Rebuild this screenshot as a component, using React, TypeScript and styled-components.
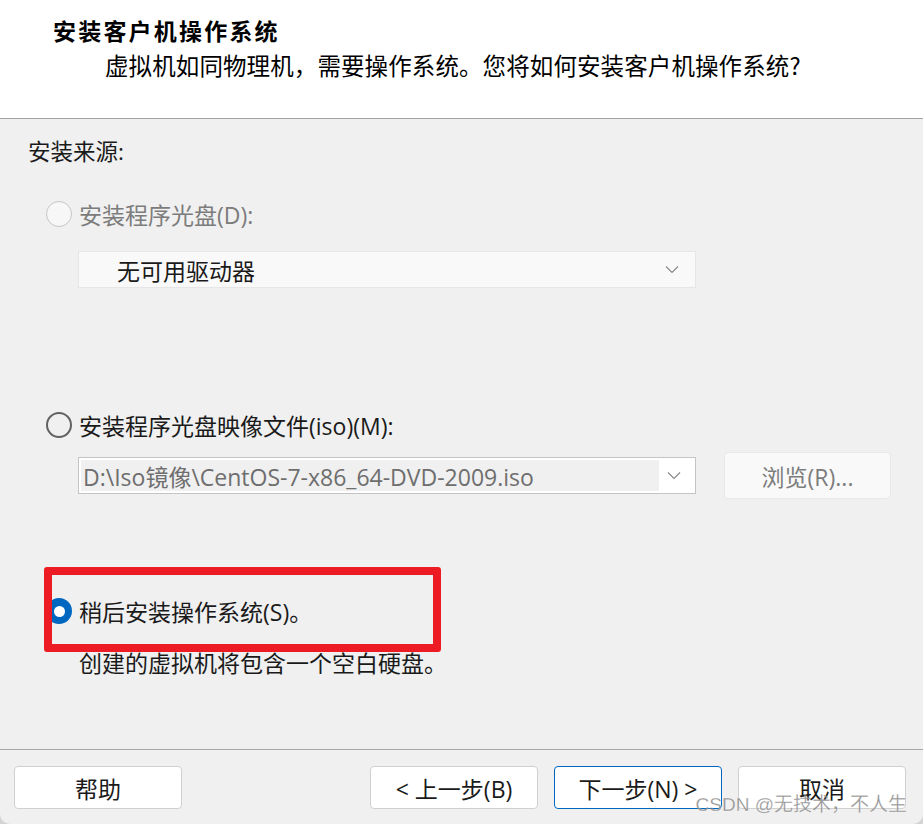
import styled, { createGlobalStyle } from 'styled-components';

const GlobalStyle = createGlobalStyle`
  html, body {
    margin: 0;
    padding: 0;
    background: #d4d4d4;
  }
  * {
    box-sizing: border-box;
  }
`;

const FONT = `"Open Sans", "Noto Sans CJK SC", sans-serif`;

const Window = styled.div`
  width: 923px;
  height: 824px;
  display: flex;
  flex-direction: column;
  background: #f0f0f0;
  border-radius: 0 0 10px 10px;
  overflow: hidden;
  position: relative;
  font-family: ${FONT};
  color: #1a1a1a;
`;

const Header = styled.header`
  height: 119px;
  background: #ffffff;
  border-bottom: 1px solid #a3a3a3;
  padding: 13px 0 0 53px;
  font-family: "Noto Sans CJK SC", sans-serif;
`;

const Title = styled.h1`
  margin: 0;
  font-size: 23px;
  font-weight: 700;
  line-height: 34px;
  letter-spacing: 2.2px;
  color: #000;
`;

const Subtitle = styled.p`
  margin: 0 0 0 52px;
  font-size: 23.5px;
  line-height: 36px;
  letter-spacing: 0.1px;
  color: #000;
`;

const Body = styled.main`
  flex: 1;
  display: flex;
  flex-direction: column;
  padding: 18px 0 0 28px;
  position: relative;
`;

const SectionLabel = styled.div`
  font-size: 22.5px;
  line-height: 30px;
  margin-bottom: 32px;
`;

const OptionRow = styled.label<{ $disabled?: boolean }>`
  display: flex;
  align-items: center;
  gap: 7px;
  margin-left: 18px;
  height: 30px;
  font-size: 23px;
  color: ${(p) => (p.$disabled ? '#7c7c7c' : '#1a1a1a')};
`;

const Radio = styled.span<{ $state: 'disabled' | 'off' | 'on' }>`
  width: 26px;
  height: 26px;
  border-radius: 50%;
  flex-shrink: 0;
  display: flex;
  align-items: center;
  justify-content: center;
  background: ${(p) =>
    p.$state === 'on' ? '#0067c0' : p.$state === 'disabled' ? '#f7f7f7' : 'transparent'};
  border: ${(p) =>
    p.$state === 'on'
      ? 'none'
      : p.$state === 'disabled'
      ? '1.5px solid #c6c6c6'
      : '2px solid #626262'};

  &::after {
    content: '';
    display: ${(p) => (p.$state === 'on' ? 'block' : 'none')};
    width: 11px;
    height: 11px;
    border-radius: 50%;
    background: #ffffff;
  }
`;

const FieldRow = styled.div<{ $top: number }>`
  display: flex;
  align-items: center;
  gap: 28px;
  margin: ${(p) => p.$top}px 0 0 50px;
`;

const Select = styled.div<{ $disabled?: boolean }>`
  width: 618px;
  height: 37px;
  display: flex;
  align-items: center;
  justify-content: space-between;
  background: ${(p) => (p.$disabled ? '#f9f9f9' : '#ffffff')};
  border: 1px solid ${(p) => (p.$disabled ? '#e6e6e6' : '#c4c4c4')};
  padding: ${(p) => (p.$disabled ? '0 16px 0 38px' : '2px 14px 2px 2px')};
  font-size: 23px;
`;

const SelectText = styled.span`
  color: #1a1a1a;
`;

const SelectInput = styled.span`
  flex: 0 0 578px;
  align-self: stretch;
  display: flex;
  align-items: center;
  background: #f0f0f0;
  padding-left: 2px;
  color: #6e6e6e;
  white-space: nowrap;
  overflow: hidden;
`;

const Chevron = () => (
  <svg width="14" height="9" viewBox="0 0 14 9">
    <path d="M1 1.5 L7 7.5 L13 1.5" fill="none" stroke="#8a8a8a" strokeWidth="1.2" />
  </svg>
);

const BrowseButton = styled.button`
  width: 167px;
  height: 47px;
  background: #f9f9f9;
  border: 1px solid #e8e8e8;
  border-radius: 4px;
  font-family: ${FONT};
  font-size: 23px;
  color: #7c7c7c;
  padding: 0;
`;

const Group = styled.div<{ $top: number }>`
  display: flex;
  flex-direction: column;
  margin-top: ${(p) => p.$top}px;
`;

const LaterGroup = styled.div`
  position: relative;
  margin-top: 97px;
  display: flex;
  flex-direction: column;
`;

const Description = styled.div`
  margin: 22px 0 0 51px;
  font-size: 23px;
  line-height: 30px;
`;

const Highlight = styled.div`
  position: absolute;
  left: 16px;
  top: -29px;
  width: 397px;
  height: 85px;
  border: 8px solid #ed1c24;
  border-radius: 3px;
  pointer-events: none;
`;

const Footer = styled.footer`
  height: 75px;
  border-top: 1px solid #a8a8a8;
  display: flex;
  align-items: flex-start;
  padding: 16px 17px 0 14px;
  gap: 16px;
`;

const Spacer = styled.div`
  flex: 1;
`;

const Button = styled.button<{ $primary?: boolean }>`
  width: 168px;
  height: 43px;
  background: #ffffff;
  border: 1px solid ${(p) => (p.$primary ? '#0067c0' : '#d0d0d0')};
  border-radius: 4px;
  font-family: ${FONT};
  font-size: 23px;
  color: #1a1a1a;
  padding: 0;
`;

const Watermark = styled.div`
  position: absolute;
  right: 16px;
  bottom: 8px;
  font-family: "Liberation Sans", "Noto Sans CJK SC", sans-serif;
  font-size: 19px;
  color: rgba(120, 120, 120, 0.75);
  pointer-events: none;
  -webkit-text-stroke: 0.3px rgba(255, 255, 255, 0.6);
`;

export default function App() {
  return (
    <>
      <GlobalStyle />
      <Window>
        <Header>
          <Title>安装客户机操作系统</Title>
          <Subtitle>虚拟机如同物理机，需要操作系统。您将如何安装客户机操作系统?</Subtitle>
        </Header>
        <Body>
          <SectionLabel>安装来源:</SectionLabel>
          <Group $top={0}>
            <OptionRow $disabled>
              <Radio $state="disabled" />
              安装程序光盘(D):
            </OptionRow>
            <FieldRow $top={22}>
              <Select $disabled>
                <SelectText>无可用驱动器</SelectText>
                <Chevron />
              </Select>
            </FieldRow>
          </Group>
          <Group $top={122}>
            <OptionRow>
              <Radio $state="off" />
              安装程序光盘映像文件(iso)(M):
            </OptionRow>
            <FieldRow $top={12}>
              <Select>
                <SelectInput>D:\Iso镜像\CentOS-7-x86_64-DVD-2009.iso</SelectInput>
                <Chevron />
              </Select>
              <BrowseButton>浏览(R)...</BrowseButton>
            </FieldRow>
          </Group>
          <LaterGroup>
            <OptionRow>
              <Radio $state="on" />
              稍后安装操作系统(S)。
            </OptionRow>
            <Description>创建的虚拟机将包含一个空白硬盘。</Description>
            <Highlight />
          </LaterGroup>
        </Body>
        <Footer>
          <Button>帮助</Button>
          <Spacer />
          <Button>&lt; 上一步(B)</Button>
          <Button $primary>下一步(N) &gt;</Button>
          <Button>取消</Button>
        </Footer>
        <Watermark>CSDN @无技术，不人生</Watermark>
      </Window>
    </>
  );
}
